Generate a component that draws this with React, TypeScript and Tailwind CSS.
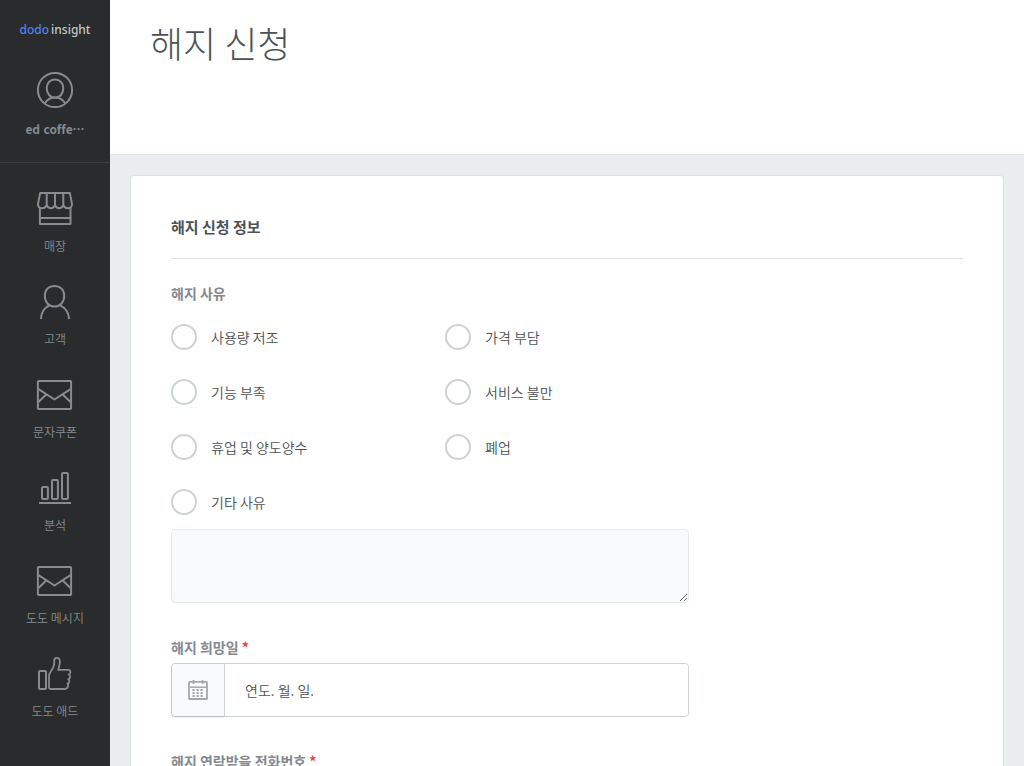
import type { ReactNode } from 'react';

const reasons = ['사용량 저조', '가격 부담', '기능 부족', '서비스 불만', '휴업 및 양도양수', '폐업', '기타 사유'];

function Icon({ children }: { children: ReactNode }) {
  return (
    <svg
      viewBox="0 0 40 40"
      className="size-10"
      fill="none"
      stroke="currentColor"
      strokeWidth="2"
      strokeLinejoin="round"
      aria-hidden="true"
    >
      {children}
    </svg>
  );
}

function ProfileIcon() {
  return (
    <Icon>
      <circle cx="20" cy="20" r="17.1" />
      <path d="M20 9.600c-5 0-8.300 3.600-8.300 8.400 0 5.500 3.300 9.800 8.300 9.800s8.300-4.300 8.300-9.800c0-4.800-3.300-8.400-8.300-8.400z" />
      <path d="M9.600 33.600c2.600-4 6.200-6 10.400-6s7.800 2 10.400 6" />
    </Icon>
  );
}

function StoreIcon() {
  return (
    <Icon>
      <path d="M5.200 4.900h29.600l2.200 11c0 2.600-1.600 4.300-4.200 4.300-2.200 0-3.700-1-4.500-3-.8 2-2.200 3-4.200 3s-3.400-1-4.100-3c-.7 2-2.100 3-4.100 3s-3.400-1-4.200-3c-.8 2-2.300 3-4.500 3-2.600 0-4.200-1.700-4.200-4.300z" />
      <path d="M11.700 5v12M20 5v12M28.300 5v12M4.900 20v16.100h30.600V20M5 30h30.400" />
    </Icon>
  );
}

function CustomerIcon() {
  return (
    <Icon>
      <path d="M19.500 4.900c-5.900 0-9.700 4.100-9.700 9.900 0 6.200 3.900 10.700 9.700 10.700s9.700-4.500 9.700-10.700c0-5.800-3.800-9.900-9.700-9.900z" />
      <path d="M6 38c0-6.200 3-10.800 8.200-13.600M34 38c0-6.200-3.600-11-9-13.600" />
    </Icon>
  );
}

function MailIcon() {
  return (
    <Icon>
      <rect x="2.900" y="6.900" width="33.200" height="28.200" rx="0.800" />
      <path d="M3.500 15.200l16 10.300 16-10.300M3.500 28l7.700-7.500M35.500 28l-7.700-7.500" />
    </Icon>
  );
}

function ChartIcon() {
  return (
    <Icon>
      <rect x="7" y="20" width="5.900" height="12.100" rx="1" />
      <rect x="17" y="13" width="5.900" height="19.100" rx="1" />
      <rect x="27" y="6" width="5.900" height="26.100" rx="1" />
      <path d="M4 36h32" />
    </Icon>
  );
}

function ThumbIcon() {
  return (
    <Icon>
      <rect x="4" y="18" width="7" height="18.100" rx="0.800" />
      <path
        strokeWidth="1.800"
        d="M14 22.800c0-3.600 5.200-6.800 5.200-12.600V8c0-2 .9-3.100 2.600-3.100 2 0 3.100 1.500 3.100 4.100 0 3.100-.9 5.300-1.800 7.900h10c1.500 0 2.300.9 2.300 2.200s-.6 2.300-1.700 2.500c1 .4 1.500 1.200 1.400 2.400-.1 1.300-.9 2.100-1.900 2.300.9.500 1.300 1.300 1.100 2.300-.2 1.200-.9 1.900-1.800 2.100.7.500.9 1.200.7 2-.4 2.100-1.500 3.300-3.500 3.300H15.400c-.9 0-1.400-.5-1.400-1.400z"
      />
    </Icon>
  );
}

function CalendarIcon() {
  return (
    <svg viewBox="0 0 20 20" className="size-5" fill="none" stroke="currentColor" aria-hidden="true">
      <rect x="1" y="1.800" width="18" height="17.200" rx="0.600" strokeWidth="1.800" />
      <path d="M1 7.200h18" strokeWidth="1.500" />
      <path d="M5.500 0v4M14.500 0v4" strokeWidth="1.800" />
      <path d="M4.500 10h12M4.500 13h12M4.500 16h12" strokeWidth="2" strokeDasharray="2.200 1.800" />
    </svg>
  );
}

const menu = [
  { label: '매장', icon: <StoreIcon /> },
  { label: '고객', icon: <CustomerIcon /> },
  { label: '문자쿠폰', icon: <MailIcon /> },
  { label: '분석', icon: <ChartIcon /> },
  { label: '도도 메시지', icon: <MailIcon /> },
  { label: '도도 애드', icon: <ThumbIcon /> },
];

function FieldLabel({ htmlFor, children }: { htmlFor: string; children: ReactNode }) {
  return (
    <label htmlFor={htmlFor} className="block text-sm leading-5 font-bold text-[#85898d]">
      {children} <span className="text-[#f5393d]">*</span>
    </label>
  );
}

export default function App() {
  return (
    <div className="flex h-screen bg-[#e9edee] font-['Noto_Sans_CJK_KR',sans-serif] font-[350] text-[#4d5256]">
      <aside className="flex w-[110px] shrink-0 flex-col overflow-hidden bg-[#292b2c] text-[#868c91]">
        <div className="flex flex-col items-center border-b border-[#3b3e40] pt-5 pb-[23px]">
          <a
            href="#home"
            className="flex gap-[2px] font-['Noto_Sans',sans-serif] text-xs leading-5 font-medium text-[#c4c8ca]"
          >
            <span className="text-[#4f83f8]">dodo</span>
            <span>insight</span>
          </a>
          <a href="#profile" className="mt-[30px] flex flex-col items-center gap-[9px]">
            <ProfileIcon />
            <span lang="ko" className="text-xs leading-5 font-bold [font-variant-ligatures:none]">
              ed coffe…
            </span>
          </a>
        </div>
        <nav className="flex flex-col gap-[26px] pt-[25px]">
          {menu.map((item) => (
            <a key={item.label} href="#menu" className="flex flex-col items-center gap-[9px]">
              {item.icon}
              <span className="text-xs leading-[18px]">{item.label}</span>
            </a>
          ))}
        </nav>
      </aside>

      <main className="min-w-0 flex-1 overflow-y-auto [scrollbar-width:none]">
        <header className="border-b border-[#dde1e4] bg-white px-10 pt-[18px] pb-[88px]">
          <h1 className="text-4xl leading-[48px] font-light">해지 신청</h1>
        </header>

        <form className="mx-5 mt-5 rounded border border-[#dde1e4] bg-white px-10 pt-10 pb-10">
          <h2 className="border-b border-[#dde1e4] pb-5 text-[15px] leading-[22px] font-bold">해지 신청 정보</h2>

          <fieldset className="mt-6">
            <legend className="text-sm leading-5 font-bold text-[#85898d]">해지 사유</legend>
            <div className="mt-[21px] grid max-w-[548px] grid-cols-2 gap-y-[29px]">
              {reasons.map((reason) => (
                <label key={reason} className="flex items-center gap-[14px] text-sm leading-5">
                  <input
                    type="radio"
                    name="reason"
                    value={reason}
                    className="size-[26px] appearance-none rounded-full border-2 border-[#cdd2d5] bg-white checked:border-8 checked:border-[#4c7ff0]"
                  />
                  {reason}
                </label>
              ))}
            </div>
            <textarea
              aria-label="기타 사유"
              className="mt-[14px] block h-[74px] w-full max-w-[518px] resize rounded border border-[#e7ebed] bg-[#f9fafc] p-3 text-sm"
            />
          </fieldset>

          <div className="mt-[34px] max-w-[518px]">
            <FieldLabel htmlFor="date">해지 희망일</FieldLabel>
            <div className="mt-[6px] flex h-[54px] rounded border border-[#cdd2d5]">
              <span className="flex w-[53px] items-center justify-center rounded-l border-r border-[#cdd2d5] bg-[#f9fafc] text-[#a3a8ac] shadow-sm">
                <CalendarIcon />
              </span>
              <input
                id="date"
                type="text"
                defaultValue="연도. 월. 일."
                className="min-w-0 flex-1 rounded-r bg-white px-5 text-sm outline-none"
              />
            </div>
          </div>

          <div className="mt-[34px] max-w-[518px]">
            <FieldLabel htmlFor="phone">해지 연락받을 전화번호</FieldLabel>
            <input
              id="phone"
              type="tel"
              className="mt-[6px] h-[54px] w-full rounded border border-[#cdd2d5] bg-white px-5 text-sm outline-none"
            />
          </div>
        </form>
      </main>
    </div>
  );
}
